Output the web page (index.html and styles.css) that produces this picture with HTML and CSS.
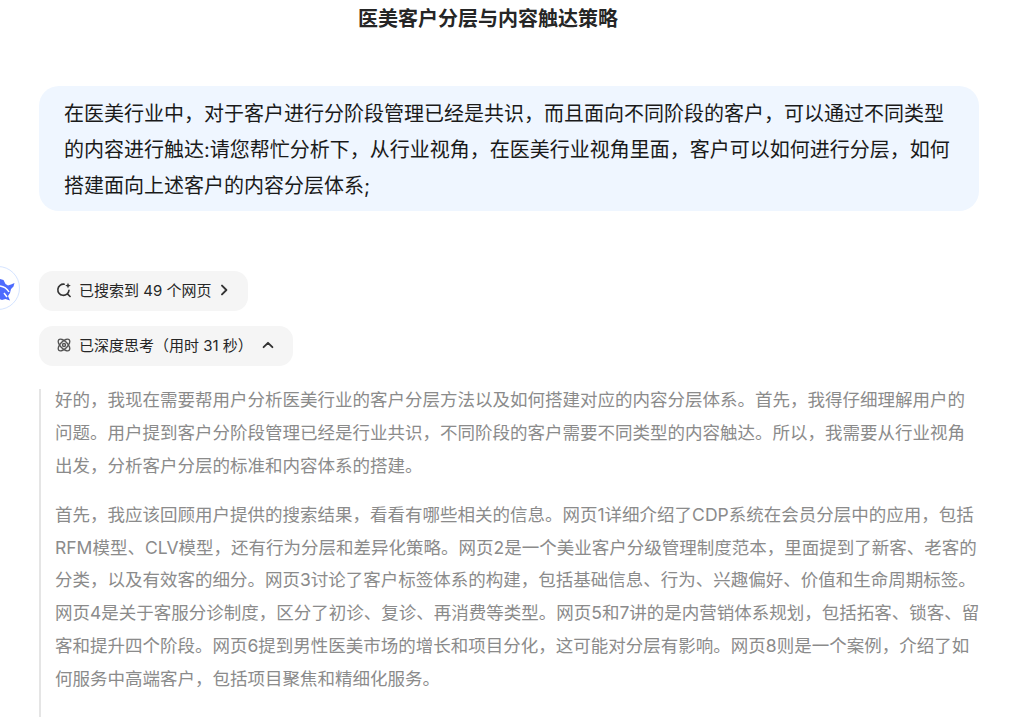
FILE: index.html
```html
<!DOCTYPE html>
<html lang="zh">
<head>
<meta charset="utf-8">
<title>医美客户分层与内容触达策略</title>
<link rel="stylesheet" href="styles.css">
</head>
<body>
<header class="title-bar"><h1 class="title">医美客户分层与内容触达策略</h1></header>
<main class="chat">
  <section class="bubble">在医美行业中，对于客户进行分阶段管理已经是共识，而且面向不同阶段的客户，可以通过不同类型的内容进行触达:请您帮忙分析下，从行业视角，在医美行业视角里面，客户可以如何进行分层，如何搭建面向上述客户的内容分层体系;</section>
  <section class="answer">
    <div class="avatar">
      <svg viewBox="0 0 44 44" width="44" height="44"><path class="whale" d="M24 13l3.5 1 2 4 2.5 1.5 3-1 3.500-1.500-1 3.500-2.500 2.500-1 4-2 3 2 4.500-4.500-1.500-3.500 1-4-1.500-2 .5z"/><path class="whale-cut" d="M24 20c4 .5 7 2.500 9 6M28 27l3 4"/></svg>
    </div>
    <button class="chip chip-search">
      <svg class="icon" viewBox="0 0 16 16" width="16" height="16"><path d="M8.200 2.200A5.600 5.600 0 1 0 13 8.400M11.200 11.600l2.900 2.900" fill="none" stroke="#333" stroke-width="1.600" stroke-linecap="round"/><path d="M12 .8l.8 2 2 .8-2 .8-.8 2-.8-2-2-.8 2-.8z" fill="#333"/></svg>
      <span>已搜索到 49 个网页</span>
      <svg class="chev" viewBox="0 0 12 12" width="12" height="12"><path d="M4 1.600L8.400 6 4 10.400" fill="none" stroke="#333" stroke-width="1.900" stroke-linecap="round" stroke-linejoin="round"/></svg>
    </button>
    <button class="chip chip-think">
      <svg class="icon" viewBox="0 0 16 16" width="16" height="16"><g fill="none" stroke="#555" stroke-width="1.400"><ellipse cx="8" cy="8" rx="7.400" ry="3.600" transform="rotate(45 8 8)"/><ellipse cx="8" cy="8" rx="7.400" ry="3.600" transform="rotate(-45 8 8)"/><circle cx="8" cy="8" r="1.500"/></g></svg>
      <span>已深度思考（用时 31 秒）</span>
      <svg class="chev chev-up" viewBox="0 0 12 12" width="12" height="12"><path d="M1.600 8.200L6 3.800l4.400 4.400" fill="none" stroke="#333" stroke-width="1.900" stroke-linecap="round" stroke-linejoin="round"/></svg>
    </button>
    <div class="thinking">
      <p>好的，我现在需要帮用户分析医美行业的客户分层方法以及如何搭建对应的内容分层体系。首先，我得仔细理解用户的问题。用户提到客户分阶段管理已经是行业共识，不同阶段的客户需要不同类型的内容触达。所以，我需要从行业视角出发，分析客户分层的标准和内容体系的搭建。</p>
      <p>首先，我应该回顾用户提供的搜索结果，看看有哪些相关的信息。网页1详细介绍了CDP系统在会员分层中的应用，包括RFM模型、CLV模型，还有行为分层和差异化策略。网页2是一个美业客户分级管理制度范本，里面提到了新客、老客的分类，以及有效客的细分。网页3讨论了客户标签体系的构建，包括基础信息、行为、兴趣偏好、价值和生命周期标签。网页4是关于客服分诊制度，区分了初诊、复诊、再消费等类型。网页5和7讲的是内营销体系规划，包括拓客、锁客、留客和提升四个阶段。网页6提到男性医美市场的增长和项目分化，这可能对分层有影响。网页8则是一个案例，介绍了如何服务中高端客户，包括项目聚焦和精细化服务。</p>
    </div>
  </section>
</main>
</body>
</html>
```

FILE: styles.css
```css
* { box-sizing: border-box; }
html, body { margin: 0; padding: 0; height: 717px; overflow: hidden; background: #fff; }
body { font-family: "Inter", "Noto Sans CJK SC", sans-serif; color: #1a1a1a; }
.title-bar { height: 38px; display: flex; justify-content: center; padding-right: 40px; }
.title { margin: 0; font-size: 20px; line-height: 38px; font-weight: 700; color: #262626; }
.chat { width: 940px; margin: 48px 0 0 39px; display: flex; flex-direction: column; }
.bubble { background: #eff6ff; border-radius: 20px; padding: 10px 25px 7px; font-size: 20px; line-height: 36px; color: #1a1a1a; }
.answer { position: relative; margin-top: 60px; display: flex; flex-direction: column; align-items: flex-start; }
.avatar { position: absolute; left: -63px; top: -5px; width: 44px; height: 44px; border-radius: 50%; border: 1.5px solid #d5e4ff; background: #fff; overflow: hidden; }
.avatar svg { display: block; margin: -1.5px; }
.whale { fill: #4d6bfe; }
.whale-cut { fill: none; stroke: #fff; stroke-width: 1.5; }
.chip { border: 0; background: #f5f5f5; border-radius: 14px; height: 40px; display: flex; align-items: center; font: inherit; font-size: 15px; color: #262626; padding: 0 0 3px 17px; }
.chip-search { width: 209px; }
.chip-think { width: 254px; margin-top: 15px; }
.icon { flex: none; margin-right: 7px; }
.chev { flex: none; margin-left: 7px; }
.chev-up { margin-left: 9px; }
.thinking { margin-top: 23px; border-left: 2px solid #e5e5e5; padding-left: 14px; width: 942px; height: 328px; color: #8b8b8b; font-size: 17.5px; line-height: 32.8px; }
.thinking p { margin: 0 0 16.5px; }
.thinking p:first-child { margin-top: -5px; }
```
